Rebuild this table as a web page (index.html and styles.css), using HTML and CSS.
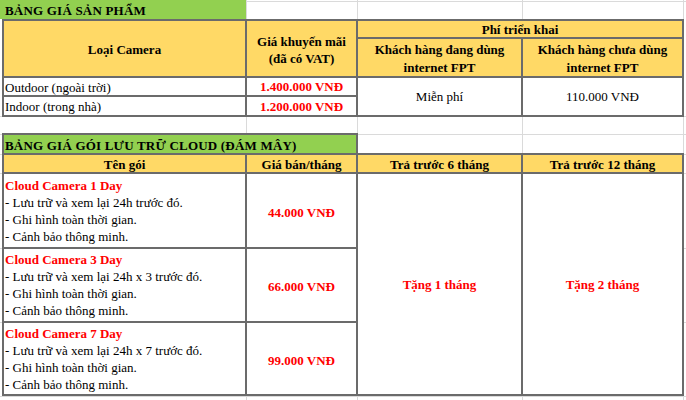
FILE: index.html
```html
<!DOCTYPE html>
<html lang="vi">
<head>
<meta charset="utf-8">
<title>Bảng giá</title>
<link rel="stylesheet" href="styles.css">
</head>
<body>
<div class="sheet">
  <div class="title">BẢNG GIÁ SẢN PHẨM</div>
  <div class="grid products">
    <div class="cell head rows2 two">Loại Camera</div>
    <div class="cell head rows2 two">Giá khuyến mãi<br>(đã có VAT)</div>
    <div class="cell head cols2 phi">Phí triển khai</div>
    <div class="cell head sub">Khách hàng đang dùng<br>internet FPT</div>
    <div class="cell head sub">Khách hàng chưa dùng<br>internet FPT</div>
    <div class="cell left">Outdoor (ngoài trời)</div>
    <div class="cell price">1.400.000 VNĐ</div>
    <div class="cell rows2">Miễn phí</div>
    <div class="cell rows2">110.000 VNĐ</div>
    <div class="cell left">Indoor (trong nhà)</div>
    <div class="cell price">1.200.000 VNĐ</div>
  </div>
  <div class="spacer"></div>
  <div class="title boxed">BẢNG GIÁ GÓI LƯU TRỮ CLOUD (ĐÁM MÂY)</div>
  <div class="grid cloud">
    <div class="cell head low">Tên gói</div>
    <div class="cell head low">Giá bán/tháng</div>
    <div class="cell head low">Trả trước 6 tháng</div>
    <div class="cell head low">Trả trước 12 tháng</div>

    <div class="cell pkg">
      <div class="pkg-name">Cloud Camera 1 Day</div>
      <div>- Lưu trữ và xem lại 24h trước đó.</div>
      <div>- Ghi hình toàn thời gian.</div>
      <div>- Cảnh bảo thông minh.</div>
    </div>
    <div class="cell price lowered">44.000 VNĐ</div>
    <div class="cell price rows3">Tặng 1 tháng</div>
    <div class="cell price rows3">Tặng 2 tháng</div>

    <div class="cell pkg">
      <div class="pkg-name">Cloud Camera 3 Day</div>
      <div>- Lưu trữ và xem lại 24h x 3 trước đó.</div>
      <div>- Ghi hình toàn thời gian.</div>
      <div>- Cảnh bảo thông minh.</div>
    </div>
    <div class="cell price lowered">66.000 VNĐ</div>

    <div class="cell pkg">
      <div class="pkg-name">Cloud Camera 7 Day</div>
      <div>- Lưu trữ và xem lại 24h x 7 trước đó.</div>
      <div>- Ghi hình toàn thời gian.</div>
      <div>- Cảnh bảo thông minh.</div>
    </div>
    <div class="cell price lowered">99.000 VNĐ</div>
  </div>
</div>
</body>
</html>
```

FILE: styles.css
```css
* {
  box-sizing: border-box;
}

html,
body {
  margin: 0;
  padding: 0;
}

body {
  width: 686px;
  height: 400px;
  overflow: hidden;
  background: #ffffff;
  font-family: "Liberation Serif", "Times New Roman", serif;
  font-size: 13px;
  color: #000000;
}

.sheet {
  width: 686px;
  height: 400px;
  background-color: #ffffff;
  background-image:
    linear-gradient(90deg,
      transparent 0 246px, #dadada 246px 247px,
      transparent 247px 357px, #dadada 357px 358px,
      transparent 358px 522px, #dadada 522px 523px,
      transparent 523px 683px, #dadada 683px 684px,
      transparent 684px),
    linear-gradient(180deg,
      transparent 0 1px, #dadada 1px 2px,
      transparent 2px 116px, #dadada 116px 117px,
      transparent 117px 134px, #dadada 134px 135px,
      transparent 135px 154px, #dadada 154px 155px,
      transparent 155px 173px, #dadada 173px 174px,
      transparent 174px 248px, #dadada 248px 249px,
      transparent 249px 322px, #dadada 322px 323px,
      transparent 323px 396px, #dadada 396px 397px,
      transparent 397px);
}

.title {
  width: 246px;
  height: 19px;
  padding: 2px 0 0 5px;
  line-height: 17px;
  background: #92d050;
  font-weight: bold;
  letter-spacing: 0.2px;
}

.title.boxed {
  width: 356px;
  height: 20px;
  margin-left: 2px;
  padding: 3px 0 0 1px;
  line-height: 16px;
  border: 2px solid #6b6b6b;
  border-bottom: 0;
}

.spacer {
  height: 16px;
}

.grid {
  display: grid;
  width: 682px;
  margin-left: 2px;
  padding: 2px;
  gap: 2px;
  background: #6b6b6b;
  grid-template-columns: 241px 109px 163px 159px;
}

.products {
  grid-template-rows: 16px 37px 17px 18px;
}

.cloud {
  grid-template-rows: 17px 73px 72px 71px;
}

.cell {
  display: flex;
  flex-direction: column;
  align-items: center;
  justify-content: center;
  text-align: center;
  background: #ffffff;
  line-height: 17px;
  white-space: nowrap;
}

.head {
  background: #ffd966;
  font-weight: bold;
}

.head.two {
  padding-top: 2px;
}

.head.phi {
  padding-top: 1px;
}

.head.sub {
  padding-top: 3px;
  line-height: 18px;
}

.head.low {
  padding-top: 3px;
  line-height: 14px;
}

.left {
  align-items: flex-start;
  text-align: left;
  padding-left: 1px;
  padding-top: 1px;
}

.price {
  color: #ff0000;
  font-weight: bold;
}

.lowered {
  padding-top: 3px;
}

.rows2 {
  grid-row: span 2;
}

.rows3 {
  grid-row: span 3;
}

.cols2 {
  grid-column: span 2;
}

.pkg {
  align-items: flex-start;
  text-align: left;
  padding-left: 1px;
}

.pkg-name {
  color: #ff0000;
  font-weight: bold;
}
```
